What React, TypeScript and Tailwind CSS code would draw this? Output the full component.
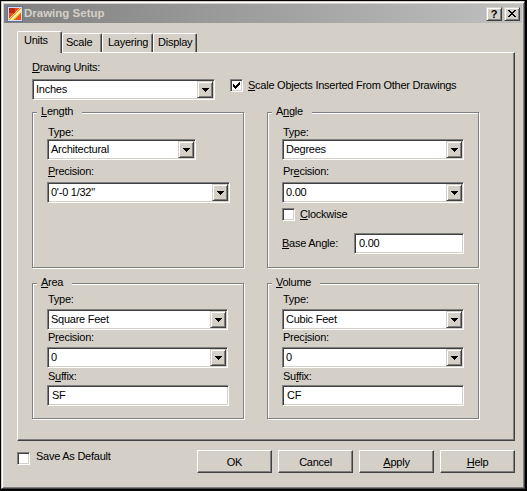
import type { ReactNode } from "react";

const sunken =
  "border border-t-[#808080] border-l-[#808080] border-b-white border-r-white shadow-[inset_1px_1px_0_#404040,inset_-1px_-1px_0_#d4d0c8]";
const raised =
  "border border-t-white border-l-white border-b-[#404040] border-r-[#404040] shadow-[inset_-1px_-1px_0_#808080]";
const raisedSoft =
  "border border-t-[#d4d0c8] border-l-[#d4d0c8] border-b-[#404040] border-r-[#404040] shadow-[inset_1px_1px_0_#fff,inset_-1px_-1px_0_#808080]";

function U({ children }: { children: ReactNode }) {
  return <span className="underline underline-offset-[1px]">{children}</span>;
}

function Label({ children, className = "" }: { children: ReactNode; className?: string }) {
  return <div className={`leading-[13px] whitespace-nowrap ${className}`}>{children}</div>;
}

function Arrow() {
  return (
    <svg width="7" height="4" viewBox="0 0 7 4" shapeRendering="crispEdges">
      <path d="M0 0H7V1H6V2H5V3H4V4H3V3H2V2H1V1H0Z" fill="#000" />
    </svg>
  );
}

function Combo({ value, w }: { value: string; w: string }) {
  return (
    <div className={`${sunken} ${w} h-[21px] bg-white p-px flex`}>
      <span className="flex-1 pl-[2px] leading-[17px] whitespace-nowrap overflow-hidden">{value}</span>
      <span className={`${raisedSoft} w-[16px] h-[17px] bg-[#d4d0c8] flex items-center justify-center`}>
        <Arrow />
      </span>
    </div>
  );
}

function Field({ value, w }: { value: string; w: string }) {
  return (
    <div className={`${sunken} ${w} h-[21px] bg-white p-px`}>
      <div className="pl-[3px] leading-[17px]">{value}</div>
    </div>
  );
}

function Check({ checked = false }: { checked?: boolean }) {
  return (
    <span className={`${sunken} w-[13px] h-[13px] bg-white flex items-center justify-center shrink-0`}>
      {checked && (
        <svg width="7" height="7" viewBox="0 0 7 7" shapeRendering="crispEdges">
          <path
            d="M6 0H7V3H6V4H5V5H4V6H3V7H2V6H1V5H0V2H1V3H2V4H3V3H4V2H5V1H6Z"
            fill="#000"
          />
        </svg>
      )}
    </span>
  );
}

function Group({
  title,
  className,
  children,
}: {
  title: ReactNode;
  className: string;
  children: ReactNode;
}) {
  return (
    <div
      className={`relative border border-[#808080] shadow-[1px_1px_0_#fff,inset_1px_1px_0_#fff] ${className}`}
    >
      <span className="absolute -top-[8px] left-[4px] bg-[#d4d0c8] pl-[4px] pr-[9px] leading-[13px]">
        {title}
      </span>
      {children}
    </div>
  );
}

function Button({ children }: { children: ReactNode }) {
  return (
    <button className={`${raised} w-[75px] h-[23px] bg-[#d4d0c8] flex items-center justify-center leading-[13px] pt-px`}>
      {children}
    </button>
  );
}

function TitleIcon() {
  return (
    <svg width="16" height="16" viewBox="0 0 16 16">
      <rect x="0.5" y="0.5" width="15" height="15" fill="#d8dce8" stroke="#5a72a8" />
      <rect x="2" y="2" width="12" height="12" fill="#e8501c" />
      <rect x="2" y="2" width="6" height="5" fill="#c02818" />
      <path d="M2 14L14 2V7L7 14Z" fill="#f8d020" />
      <path d="M4 14L14 4" stroke="#fff" strokeWidth="1.2" />
      <path d="M2 13L13 2" stroke="#fbe890" strokeWidth="0.8" />
    </svg>
  );
}

function TitleBar() {
  return (
    <div className="h-[19px] shrink-0 flex items-center pl-[3px] pr-[2px] bg-gradient-to-r from-[#808080] to-[#c0c0c0]">
      <TitleIcon />
      <span className="ml-[1px] font-bold text-[11.5px] tracking-normal text-[#d4d0c8] leading-[13px]">
        Drawing Setup
      </span>
      <div className="ml-auto flex gap-[2px]">
        <span className={`${raisedSoft} w-[16px] h-[14px] bg-[#d4d0c8] flex items-center justify-center font-bold text-[11px] leading-[12px] tracking-normal`}>
          ?
        </span>
        <span className={`${raisedSoft} w-[16px] h-[14px] bg-[#d4d0c8] flex items-center justify-center`}>
          <svg width="8" height="7" viewBox="0 0 8 7" shapeRendering="crispEdges">
            <path
              d="M0 0H2V1H3V2H5V1H6V0H8V1H7V2H6V3H5V4H6V5H7V6H8V7H6V6H5V5H3V6H2V7H0V6H1V5H2V4H3V3H2V2H1V1H0Z"
              fill="#000"
            />
          </svg>
        </span>
      </div>
    </div>
  );
}

const tabs = [
  { name: "Units", w: "w-[45px]", pl: "pl-[6px]" },
  { name: "Scale", w: "w-[40px]", pl: "pl-[3px]" },
  { name: "Layering", w: "w-[51px]", pl: "pl-[5px]" },
  { name: "Display", w: "w-[44px]", pl: "pl-[4px]" },
];

export default function App() {
  return (
    <div className="min-h-screen bg-black pt-px pl-px font-['Liberation_Sans',Arial,sans-serif] text-[11px] leading-[13px] tracking-[-0.25px] text-black">
      <div className="w-[524px] h-[488px] bg-[#d4d0c8] border border-t-[#d4d0c8] border-l-[#d4d0c8] border-b-[#404040] border-r-[#404040] shadow-[inset_1px_1px_0_#fff,inset_-1px_-1px_0_#808080] p-[2px] flex flex-col">
        <TitleBar />

        <div className="pl-[13px] pt-[8px]">
          {/* tab strip */}
          <div className="flex items-end h-[21px]">
            {tabs.map((t, i) =>
              i === 0 ? (
                <div
                  key={t.name}
                  className={`${t.w} ${t.pl} relative z-10 -mb-px h-[22px] bg-[#d4d0c8] border-l border-t border-r border-l-white border-t-white border-r-[#404040] rounded-t-[2px] pt-[2px] shadow-[inset_-1px_0_0_#808080]`}
                >
                  {t.name}
                </div>
              ) : (
                <div
                  key={t.name}
                  className={`${t.w} ${t.pl} h-[19px] bg-[#d4d0c8] border-l border-t border-r border-l-white border-t-white border-r-[#404040] rounded-t-[2px] pt-[2px] shadow-[inset_-1px_0_0_#808080]`}
                >
                  {t.name}
                </div>
              )
            )}
          </div>

          {/* tab panel */}
          <div className="w-[498px] h-[389px] border border-t-white border-l-white border-b-[#404040] border-r-[#404040] shadow-[inset_-1px_-1px_0_#808080] pl-[14px] pt-[8px]">
            <Label>
              <U>D</U>rawing Units:
            </Label>
            <div className="mt-[5px] flex items-start">
              <Combo value="Inches" w="w-[183px]" />
              <div className="ml-[15px] flex items-center gap-[5px]">
                <Check checked />
                <Label>
                  <U>S</U>cale Objects Inserted From Other Drawings
                </Label>
              </div>
            </div>

            <div className="mt-[12px] flex gap-[23px]">
              <Group
                title={
                  <>
                    <U>L</U>ength
                  </>
                }
                className="w-[212px] h-[156px] pt-[13px] pl-[14px]"
              >
                <Label className="pl-px">Type:</Label>
                <Combo value="Architectural" w="w-[149px]" />
                <Label className="pl-px mt-[5px]">
                  <U>P</U>recision:
                </Label>
                <div className="mt-[4px]">
                  <Combo value={`0'-0 1/32"`} w="w-[183px]" />
                </div>
              </Group>

              <Group
                title={
                  <>
                    A<U>n</U>gle
                  </>
                }
                className="w-[212px] h-[156px] pt-[13px] pl-[14px]"
              >
                <Label className="pl-px">Type:</Label>
                <Combo value="Degrees" w="w-[182px]" />
                <Label className="pl-px mt-[5px]">
                  Pr<U>e</U>cision:
                </Label>
                <div className="mt-[4px]">
                  <Combo value="0.00" w="w-[182px]" />
                </div>
                <div className="mt-[5px] flex items-center gap-[5px]">
                  <Check />
                  <Label>
                    <U>C</U>lockwise
                  </Label>
                </div>
                <div className="mt-[12px] flex items-center">
                  <Label className="w-[72px]">
                    <U>B</U>ase Angle:
                  </Label>
                  <Field value="0.00" w="w-[110px]" />
                </div>
              </Group>
            </div>

            <div className="mt-[15px] flex gap-[23px]">
              <Group
                title={
                  <>
                    <U>A</U>rea
                  </>
                }
                className="w-[212px] h-[136px] pt-[9px] pl-[14px]"
              >
                <Label className="pl-px">Type:</Label>
                <div className="mt-[3px]">
                  <Combo value="Square Feet" w="w-[181px]" />
                </div>
                <Label className="pl-px mt-[1px]">
                  P<U>r</U>ecision:
                </Label>
                <div className="mt-[3px]">
                  <Combo value="0" w="w-[181px]" />
                </div>
                <Label className="pl-px mt-[2px]">
                  S<U>u</U>ffix:
                </Label>
                <div className="mt-[2px]">
                  <Field value="SF" w="w-[182px]" />
                </div>
              </Group>

              <Group
                title={
                  <>
                    <U>V</U>olume
                  </>
                }
                className="w-[212px] h-[136px] pt-[9px] pl-[14px]"
              >
                <Label className="pl-px">Type:</Label>
                <div className="mt-[3px]">
                  <Combo value="Cubic Feet" w="w-[182px]" />
                </div>
                <Label className="pl-px mt-[1px]">
                  Prec<U>i</U>sion:
                </Label>
                <div className="mt-[3px]">
                  <Combo value="0" w="w-[182px]" />
                </div>
                <Label className="pl-px mt-[2px]">
                  Su<U>f</U>fix:
                </Label>
                <div className="mt-[2px]">
                  <Field value="CF" w="w-[182px]" />
                </div>
              </Group>
            </div>
          </div>

          {/* bottom row */}
          <div className="mt-[9px] w-[498px] flex items-start">
            <div className="flex items-start gap-[6px]">
              <span className="mt-[2px]">
                <Check />
              </span>
              <Label>Save As Default</Label>
            </div>
            <div className="ml-auto flex gap-[6px]">
              <Button>OK</Button>
              <Button>Cancel</Button>
              <Button>
                <U>A</U>pply
              </Button>
              <Button>
                <U>H</U>elp
              </Button>
            </div>
          </div>
        </div>
      </div>
    </div>
  );
}
